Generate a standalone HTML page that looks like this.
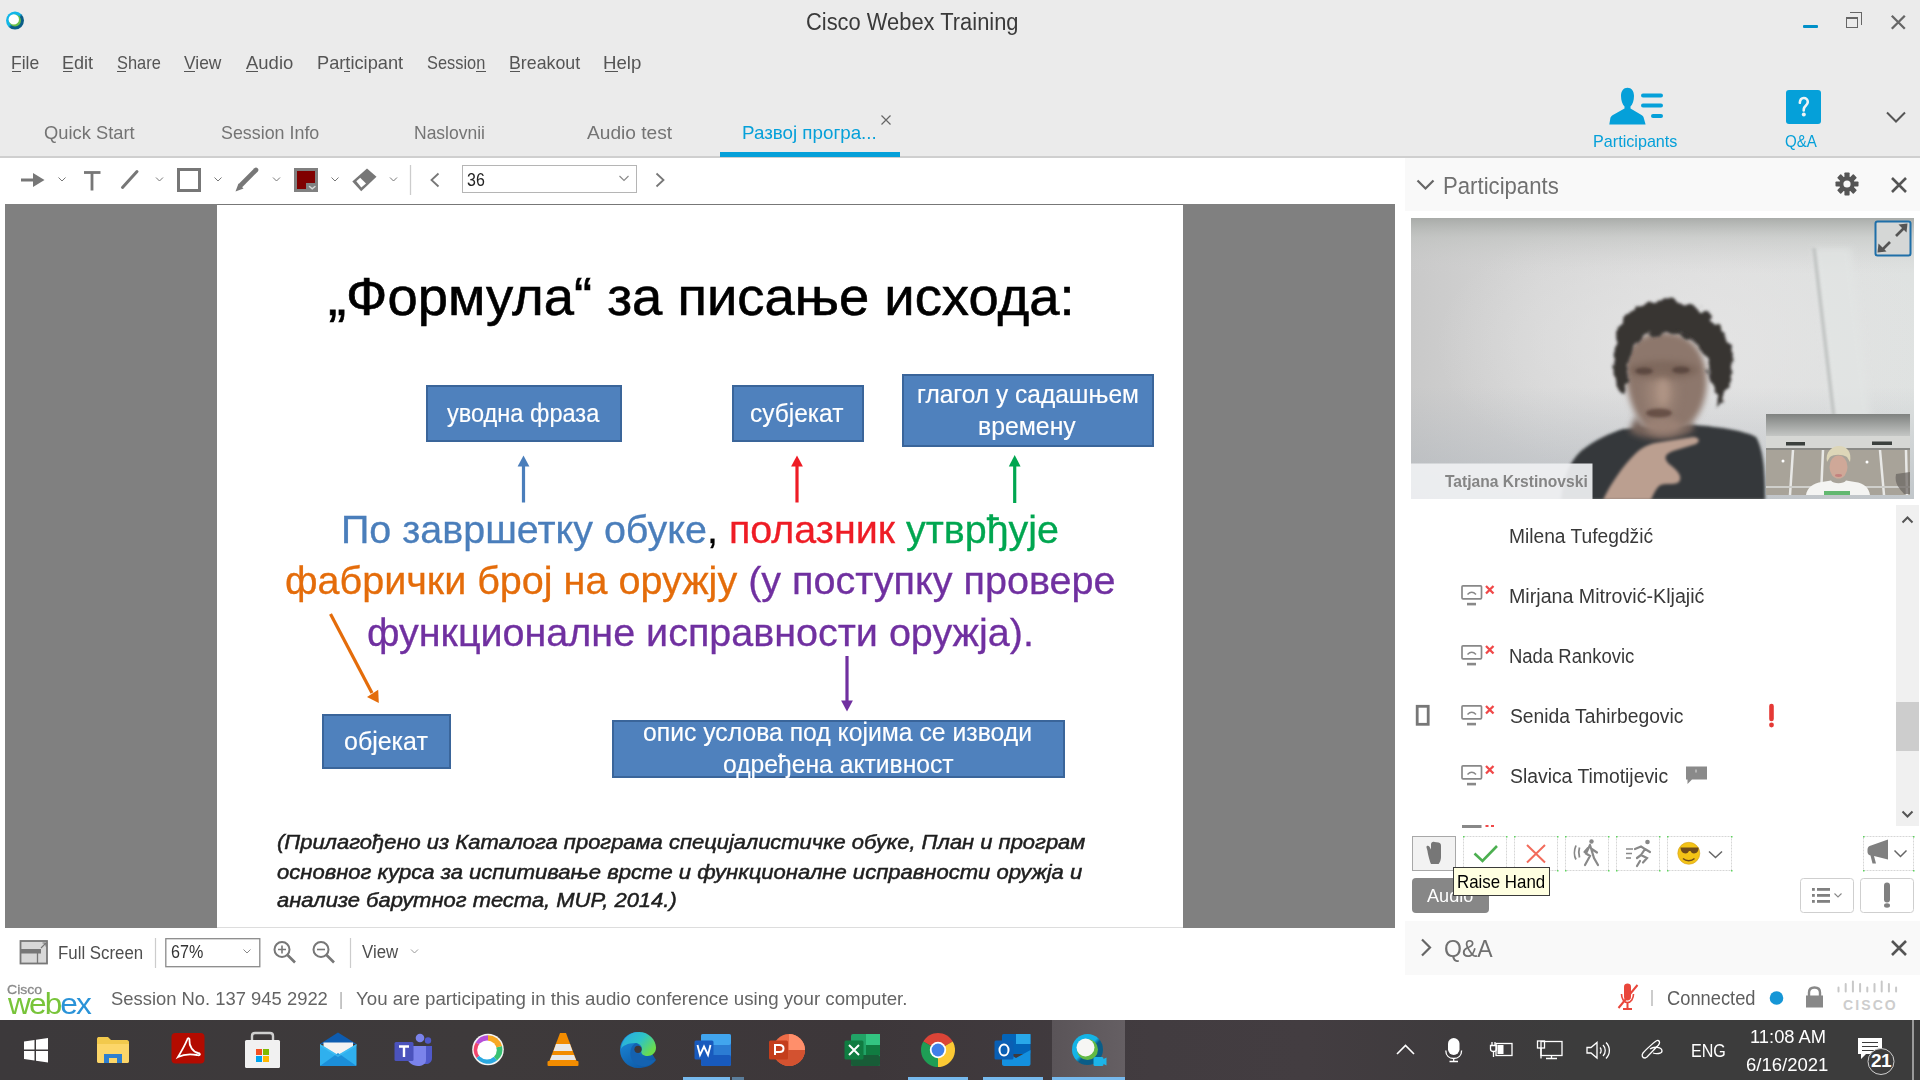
<!DOCTYPE html>
<html><head><meta charset="utf-8"><style>
html,body{margin:0;padding:0;width:1920px;height:1080px;overflow:hidden;background:#ebebeb;font-family:'Liberation Sans',sans-serif}
.a{position:absolute}
.t{position:absolute;white-space:nowrap;transform-origin:0 0}
.bm{display:inline-block;width:0;height:0}
</style></head><body>
<!-- top chrome -->
<div class=a style="left:0;top:0;width:1920px;height:157px;background:#ebebeb"></div>
<div class=a style="left:0;top:156px;width:1920px;height:2px;background:#cfcfcf"></div>
<!-- webex app icon -->
<svg class=a style="left:5px;top:11px" width="20" height="20" viewBox="0 0 20 20">
 <defs><linearGradient id="wring" x1="0.2" y1="0.2" x2="0.8" y2="0.8"><stop offset="0.45" stop-color="#12b6e8"/><stop offset="0.6" stop-color="#0a5d88"/></linearGradient></defs>
 <circle cx="10" cy="9.6" r="9" fill="url(#wring)"/>
 <circle cx="10" cy="9.6" r="6" fill="#6bbf48"/>
 <circle cx="8.8" cy="8.4" r="5.2" fill="#fff"/>
</svg>
<!-- window controls -->
<div class=a style="left:1803px;top:25px;width:15px;height:3px;background:#0090c8;border-radius:1px"></div>
<div class=a style="left:1849.6px;top:12px;width:11.4px;height:11.7px;border-top:1.9px solid #666;border-right:1.9px solid #666"></div>
<div class=a style="left:1846.4px;top:16.8px;width:10px;height:7.8px;border:1.8px solid #666;border-top-width:2.2px;background:#ebebeb"></div>
<svg class=a style="left:1889px;top:13px" width="18" height="18"><path d="M2.8 2.8L15.8 15.8M15.8 2.8L2.8 15.8" stroke="#666" stroke-width="2.3"/></svg>
<!-- tab underline & close -->
<div class=a style="left:720px;top:151.5px;width:180px;height:5.5px;background:#05a0d9"></div>
<svg class=a style="left:880px;top:114px" width="12" height="12"><path d="M1.5 1.5L10.5 10.5M10.5 1.5L1.5 10.5" stroke="#666" stroke-width="1.2"/></svg>
<!-- participants icon -->
<svg class=a style="left:1605px;top:86px" width="62" height="40" viewBox="0 0 62 40">
 <path d="M22.5 1.8C26.5 1.8 29 5 29 10C29 14.5 27.5 18.5 25.5 20.5L25.5 22.5L36.5 29C38 30 38.7 31 38.9 32.5L40.6 38.5H4.3L5.3 32.5C5.5 31 6.2 30 7.5 29.2L19.5 22.5L19.5 20.5C17.5 18.5 16 14.5 16 10C16 5 18.5 1.8 22.5 1.8Z" fill="#05a0d9"/>
 <rect x="36" y="7.5" width="22" height="4" rx="2" fill="#05a0d9"/>
 <rect x="36" y="17.5" width="22" height="4" rx="2" fill="#05a0d9"/>
 <rect x="46" y="28" width="12" height="4" rx="2" fill="#05a0d9"/>
</svg>
<!-- Q&A icon -->
<div class=a style="left:1786px;top:90px;width:35px;height:34px;background:#05a0d9;border-radius:3px"></div>
<svg class=a style="left:1786px;top:90px" width="35" height="35" viewBox="1786 90 35 35"><path d="M1799.8 102.8C1800 99.5 1802 98 1803.8 98C1806 98 1807.8 99.6 1807.8 102C1807.8 104.5 1805.5 105.5 1804.3 107.5C1803.8 108.3 1803.7 109.2 1803.7 110.5" stroke="#eef3f5" stroke-width="2.6" fill="none" stroke-linecap="round"/><circle cx="1803.8" cy="114.6" r="2" fill="#eef3f5"/></svg>
<svg class=a style="left:1885px;top:110px" width="22" height="15"><path d="M2 2.5L11 11.5L20 2.5" stroke="#555" stroke-width="2" fill="none"/></svg>

<!-- annotation toolbar -->
<div class=a style="left:0;top:158px;width:1405px;height:46px;background:#fff"></div>
<svg class=a style="left:0;top:158px" width="700" height="46">
 <g fill="#777" stroke="#777">
  <path d="M21 22h14" stroke-width="3" fill="none"/><path d="M33 15L44.5 22L33 29Z" stroke="none"/>
  <path d="M58.5 19.5l3.5 3.5l3.5-3.5" stroke-width="1" fill="none"/>
  <path d="M84 14.5h16.5" stroke-width="2.8" fill="none"/><path d="M92 14.5v18" stroke-width="2.8" fill="none"/>
  <path d="M122.5 29.5L137 13.5" stroke-width="3" stroke-linecap="round" fill="none"/>
  <path d="M156 19.5l3.5 3.5l3.5-3.5" stroke-width="1" fill="none"/>
  <rect x="178.5" y="11.5" width="21" height="21" stroke-width="3" fill="none"/>
  <path d="M214.5 19.5l3.5 3.5l3.5-3.5" stroke-width="1" fill="none"/>
  <path d="M241 27L256 12" stroke-width="4.6" stroke-linecap="round" fill="none"/><path d="M235.5 33.5L238.5 25.5L243.5 30.5Z" stroke="none"/>
  <path d="M273 19.5l3.5 3.5l3.5-3.5" stroke-width="1" fill="none"/>
  <path d="M331.5 19.5l3.5 3.5l3.5-3.5" stroke-width="1" fill="none"/>
  <path d="M352.3 23.4L367 10.5L376.5 18.7L361.2 33.3Z" stroke="none"/>
  <path d="M356.3 23.3L360.2 19.8L366 25.6L361.3 29.5Z" fill="#fff" stroke="none"/>
  <path d="M390 19.5l3.5 3.5l3.5-3.5" stroke-width="1" fill="none"/>
  <path d="M410.5 7v30" stroke="#ccc" stroke-width="1.3" fill="none"/>
  <path d="M438.5 15.5l-7 6.5l7 6.5" stroke-width="1.8" fill="none"/>
  <path d="M656.5 15.5l7 6.5l-7 6.5" stroke-width="1.8" fill="none"/>
 </g>
</svg>
<div class=a style="left:294px;top:168px;width:24px;height:24px;background:#808080"></div>
<div class=a style="left:297px;top:171px;width:18px;height:18px;background:#800000"></div>
<div class=a style="left:306px;top:183px;width:12px;height:9px;background:#808080"></div>
<svg class=a style="left:306px;top:183px" width="12" height="9"><path d="M3.5 3.5L6.2 5.8L9 3.5" stroke="#d8d8d8" stroke-width="1.5" fill="none" stroke-linecap="round"/></svg>
<div class=a style="left:462px;top:165px;width:173px;height:26px;border:1.5px solid #b5b5b5;background:#fff"></div>
<svg class=a style="left:618px;top:174px" width="12" height="9"><path d="M1.5 2l4.5 4.5L10.5 2" stroke="#888" stroke-width="1.1" fill="none"/></svg>

<!-- slide area -->
<div class=a style="left:0;top:204px;width:1405px;height:816px;background:#fff"></div>
<div class=a style="left:5px;top:204px;width:1390px;height:724px;background:#808080"></div>
<div class=a style="left:217px;top:204px;width:966px;height:1px;background:#777"></div>
<div class=a style="left:217px;top:205px;width:966px;height:722px;background:#fff"></div>
<div class=a style="left:217px;top:927px;width:966px;height:1px;background:#ddd"></div>

<!-- right panel -->
<div class=a style="left:1405px;top:158px;width:515px;height:862px;background:#fff"></div>
<div class=a style="left:1405px;top:158px;width:515px;height:53px;background:#f9f9f9"></div>

<!-- slide boxes -->
<div class=a style="left:426px;top:384.5px;width:192px;height:53px;background:#4f81bd;border:2px solid #3a659a"></div>
<div class=a style="left:732px;top:384.5px;width:127.5px;height:53px;background:#4f81bd;border:2px solid #3a659a"></div>
<div class=a style="left:901.5px;top:374px;width:248px;height:69px;background:#4f81bd;border:2px solid #3a659a"></div>
<div class=a style="left:322px;top:714px;width:125px;height:51px;background:#4f81bd;border:2px solid #3a659a"></div>
<div class=a style="left:611.5px;top:719.5px;width:449.5px;height:54px;background:#4f81bd;border:2px solid #3a659a"></div>
<svg class=a style="left:217px;top:205px" width="966" height="722">
 <g transform="translate(-217,-205)">
  <path d="M523.5 502.5V464" stroke="#4a7ebb" stroke-width="3.2"/><path d="M517.6 466.5L523.5 455.5L529.4 466.5Z" fill="#4a7ebb"/>
  <path d="M797 502.5V464" stroke="#ee1c25" stroke-width="3.2"/><path d="M791.1 466.5L797 455.5L802.9 466.5Z" fill="#ee1c25"/>
  <path d="M1014.7 503V464" stroke="#00a650" stroke-width="3.2"/><path d="M1008.8 466.5L1014.7 455L1020.6 466.5Z" fill="#00a650"/>
  <path d="M847 656V702" stroke="#7030a0" stroke-width="3.2"/><path d="M841.1 700.5L847 711.5L852.9 700.5Z" fill="#7030a0"/>
  <path d="M330.5 614L372 693" stroke="#e46c0a" stroke-width="3.2"/><path d="M367 697L378.8 703L378.2 689.8Z" fill="#e46c0a"/>
 </g>
</svg>

<!-- panel header icons -->
<svg class=a style="left:1415px;top:177px" width="22" height="16"><path d="M2.5 3.5L10.5 11.5L18.5 3.5" stroke="#666" stroke-width="2.2" fill="none"/></svg>
<svg class=a style="left:1834px;top:171px" width="26" height="26" viewBox="0 0 26 26">
 <g fill="#555" transform="translate(13,13)">
  <circle r="7.6"/>
  <rect x="-2.6" y="-11.5" width="5.2" height="6" rx="0.8"/>
  <rect x="-2.6" y="-11.5" width="5.2" height="6" rx="0.8" transform="rotate(45)"/>
  <rect x="-2.6" y="-11.5" width="5.2" height="6" rx="0.8" transform="rotate(90)"/>
  <rect x="-2.6" y="-11.5" width="5.2" height="6" rx="0.8" transform="rotate(135)"/>
  <rect x="-2.6" y="-11.5" width="5.2" height="6" rx="0.8" transform="rotate(180)"/>
  <rect x="-2.6" y="-11.5" width="5.2" height="6" rx="0.8" transform="rotate(225)"/>
  <rect x="-2.6" y="-11.5" width="5.2" height="6" rx="0.8" transform="rotate(270)"/>
  <rect x="-2.6" y="-11.5" width="5.2" height="6" rx="0.8" transform="rotate(315)"/>
  <circle r="3.6" fill="#f7f7f7"/>
 </g>
</svg>
<svg class=a style="left:1889px;top:175px" width="20" height="20"><path d="M3 3L17 17M17 3L3 17" stroke="#555" stroke-width="2.6"/></svg>

<!-- video -->
<svg class=a style="left:1411px;top:218px" width="503" height="281" viewBox="0 0 503 281">
 <defs>
  <linearGradient id="vbg" x1="0" y1="0" x2="1" y2="0">
   <stop offset="0" stop-color="#c9c9c9"/><stop offset="0.25" stop-color="#d5d5d5"/><stop offset="0.6" stop-color="#dddddd"/><stop offset="1" stop-color="#dfe2e1"/>
  </linearGradient>
  <linearGradient id="vtop" x1="0" y1="0" x2="0" y2="1">
   <stop offset="0" stop-color="#a4a7a4" stop-opacity="0.9"/><stop offset="0.07" stop-color="#bcbfbc" stop-opacity="0.5"/><stop offset="0.2" stop-color="#d0d0d0" stop-opacity="0"/>
  </linearGradient>
  <linearGradient id="vbl" x1="0" y1="0" x2="0" y2="1"><stop offset="0.6" stop-color="#a9b0b8" stop-opacity="0"/><stop offset="1" stop-color="#a9b0b8" stop-opacity="0.55"/></linearGradient>
  <radialGradient id="vlight" cx="0.55" cy="0.45" r="0.5"><stop offset="0" stop-color="#e6e6e6" stop-opacity="0.8"/><stop offset="1" stop-color="#e6e6e6" stop-opacity="0"/></radialGradient>
  <filter id="bl6" x="-50%" y="-50%" width="200%" height="200%"><feGaussianBlur stdDeviation="6"/></filter>
  <filter id="bl3" x="-50%" y="-50%" width="200%" height="200%"><feGaussianBlur stdDeviation="3"/></filter>
  <filter id="bl2" x="-50%" y="-50%" width="200%" height="200%"><feGaussianBlur stdDeviation="1.6"/></filter>
  <filter id="bl1"><feGaussianBlur stdDeviation="1"/></filter>
  <filter id="rough" x="-30%" y="-30%" width="160%" height="160%"><feTurbulence type="fractalNoise" baseFrequency="0.09" numOctaves="2" seed="3" result="n"/><feDisplacementMap in="SourceGraphic" in2="n" scale="14" xChannelSelector="R" yChannelSelector="G" result="d"/><feGaussianBlur in="d" stdDeviation="1.8"/></filter>
  <clipPath id="vclip"><rect width="503" height="281"/></clipPath>
 </defs>
 <g clip-path="url(#vclip)">
 <rect width="503" height="281" fill="url(#vbg)"/>
 <rect width="503" height="281" fill="url(#vlight)"/>
 <rect width="503" height="281" fill="url(#vtop)"/>
 <rect width="503" height="281" fill="url(#vbl)"/>
 <path d="M402 30 L440 30 L460 200 L422 200Z" fill="#e2e5e4" filter="url(#bl3)" opacity="0.7"/>
 <path d="M401 30 L405 30 L425 200 L421 200Z" fill="#bfc2c1" filter="url(#bl1)" opacity="0.8"/>
 <!-- shirt -->
 <path d="M150 282 C152 262 157 245 170 233 C185 221 200 215 212 211 L284 207 C310 209 334 213 345 219 C352 231 354 250 354 282 Z" fill="#34393b" filter="url(#bl2)"/>
 <!-- neck -->
 <path d="M225 198 C232 214 268 218 280 202 L283 212 C270 224 232 224 218 213Z" fill="#75625a" filter="url(#bl3)"/>
 <!-- face -->
 <path d="M214 152 C213 124 232 113 256 114 C282 115 296 136 296 164 C295 194 278 217 252 217 C230 217 216 186 214 152Z" fill="#8d776c" filter="url(#bl3)"/>
 <ellipse cx="250" cy="175" rx="14" ry="22" fill="#a68c7e" filter="url(#bl6)" opacity="0.8"/>
 <ellipse cx="252" cy="208" rx="18" ry="8" fill="#a08578" filter="url(#bl3)" opacity="0.7"/>
 <ellipse cx="252" cy="152" rx="36" ry="9" fill="#6a5449" filter="url(#bl3)" opacity="0.45"/>
 <ellipse cx="252" cy="174" rx="6" ry="13" fill="#b39888" filter="url(#bl3)" opacity="0.8"/>
 <ellipse cx="233" cy="153" rx="9" ry="3.5" fill="#4d3b34" filter="url(#bl2)" opacity="0.7"/>
 <ellipse cx="270" cy="152" rx="9" ry="3.5" fill="#4d3b34" filter="url(#bl2)" opacity="0.7"/>
 <ellipse cx="248" cy="195" rx="13" ry="4.5" fill="#4a302c" filter="url(#bl2)" opacity="0.6"/>
 <!-- hair -->
 <path d="M204 150 C200 126 206 103 222 92 C236 82 258 80 276 85 C300 92 318 112 322 146 C322 166 314 180 306 190 C302 170 300 150 292 135 C286 124 275 118 262 117 C250 118 238 116 228 122 C220 130 217 145 215 158 C214 166 213 172 212 178 C207 168 205 160 204 150Z" fill="#383433" filter="url(#rough)"/>
 <path d="M265 112 C280 118 292 128 297 145 C293 132 284 122 270 116Z" fill="#383433" filter="url(#bl2)"/>
 <!-- hand -->
 <path d="M192 282 C200 265 212 248 224 236 C230 230 236 227 244 225 L282 219 C288 219 290 223 285 226 L262 233 C254 236 252 240 258 246 C266 252 272 258 268 264 C262 268 254 264 248 268 C244 272 242 277 240 282 Z" fill="#bb9f90" filter="url(#bl2)"/>
 </g>
 <!-- name label -->
 <rect x="0" y="245.5" width="181.5" height="35.5" fill="#eff0f2" opacity="0.93"/>
 <!-- expand button -->
 <rect x="464.5" y="3.5" width="35" height="34" fill="#d5d7d6" stroke="#1f6fa8" stroke-width="2" rx="2"/>
 <path d="M485 18L494 9" stroke="#555" stroke-width="2.6"/>
 <path d="M487.5 6.5L496.5 5.5L495.5 14.5Z" fill="#555"/>
 <path d="M479 24L470 33" stroke="#555" stroke-width="2.6"/>
 <path d="M467.5 25.5L466.5 34.5L475.5 33.5Z" fill="#555"/>
</svg>
<!-- inset video -->
<svg class=a style="left:1766px;top:414px" width="144" height="81" viewBox="0 0 144 81">
 <defs>
  <filter id="ib1" x="-20%" y="-20%" width="140%" height="140%"><feGaussianBlur stdDeviation="0.7"/></filter>
  <linearGradient id="ceil" x1="0" y1="0" x2="0" y2="1"><stop offset="0" stop-color="#7f8280"/><stop offset="1" stop-color="#c4c6c4"/></linearGradient>
 </defs>
 <rect width="144" height="81" fill="#a8a399"/>
 <rect width="144" height="22" fill="url(#ceil)"/>
 <rect y="22" width="144" height="12" fill="#d6d7d4"/>
 <rect x="20" y="28" width="19" height="3.5" fill="#3a3f3c" filter="url(#ib1)"/>
 <rect x="106" y="27.5" width="20" height="3.5" fill="#3a3f3c" filter="url(#ib1)"/>
 <rect y="34" width="144" height="2" fill="#8a8a86"/>
 <g filter="url(#ib1)">
 <path d="M27 36L24 81M57 36L55 81M114 36L118 81M140 36L141 81" stroke="#e8e8e6" stroke-width="2.5"/>
 <path d="M0 73H144" stroke="#cfcfcb" stroke-width="2"/>
 <circle cx="17" cy="47" r="1.5" fill="#fff"/><circle cx="101" cy="48" r="1.5" fill="#fff"/>
 <path d="M130 60 C128 70 134 75 138 80 L144 80 L144 58Z" fill="#6a6460" opacity="0.7"/>
 <!-- woman -->
 <path d="M61 48 C59 38 66 32 73 32 C81 32 86 38 84 48 L81 43 C76 40 68 40 64 43Z" fill="#ddd6b8"/>
 <ellipse cx="72.5" cy="53" rx="9" ry="11.5" fill="#cfa898"/>
 <ellipse cx="72.5" cy="61.5" rx="3.5" ry="1.4" fill="#c4827e"/>
 <path d="M40 81 C41 74 47 69 56 68 L65 66.5 C67 70 78 70 80 66.5 L89 68 C98 69 103 74 104 81Z" fill="#f4f4f2"/>
 <rect x="58" y="77" width="26" height="4" fill="#62b870"/>
 </g>
</svg>
<!-- participant list icons -->
<svg class=a style="left:1405px;top:500px" width="515" height="340" viewBox="1405 500 515 340">
 <defs>
  <g id="mon">
   <rect x="1462" y="585.8" width="19.5" height="13" rx="1" fill="none" stroke="#888" stroke-width="1.7"/>
   <path d="M1467.5 594.5 Q1471.7 590 1476 594.5" stroke="#888" stroke-width="1.5" fill="none"/>
   <rect x="1467" y="602.8" width="9" height="2.6" fill="#888"/>
   <path d="M1486 586L1493.5 593.5M1493.5 586L1486 593.5" stroke="#f04848" stroke-width="2.3"/>
  </g>
 </defs>
 <use href="#mon"/>
 <use href="#mon" transform="translate(0,60)"/>
 <use href="#mon" transform="translate(0,120)"/>
 <use href="#mon" transform="translate(0,180)"/>
 <rect x="1417.2" y="706.3" width="11" height="18" fill="none" stroke="#777" stroke-width="2.8"/>
 <path d="M1771.5 706v13" stroke="#e53935" stroke-width="4.6" stroke-linecap="round"/>
 <circle cx="1771.5" cy="725" r="2.4" fill="#e53935"/>
 <path d="M1686 766.5h21v13h-15l-4.5 4.5v-4.5h-1.5z" fill="#8a8a8a"/>
 <path d="M1696 769.5v3" stroke="#ddd" stroke-width="1"/>
 <!-- partial next row -->
 <rect x="1462" y="825" width="19.5" height="3" fill="#888"/>
 <rect x="1485.5" y="825" width="3" height="2" fill="#f04848"/><rect x="1491" y="825" width="3" height="2" fill="#f04848"/>
</svg>
<!-- scrollbar -->
<div class=a style="left:1896px;top:505px;width:23px;height:321px;background:#f0f0f0"></div>
<div class=a style="left:1896px;top:702px;width:23px;height:49px;background:#cdcdcd"></div>
<svg class=a style="left:1896px;top:505px" width="23" height="321">
 <path d="M6.5 17.5L11.5 12.5L16.5 17.5" stroke="#555" stroke-width="2" fill="none"/>
 <path d="M6.5 306.5L11.5 311.5L16.5 306.5" stroke="#555" stroke-width="2" fill="none"/>
</svg>

<!-- panel toolbar buttons -->
<svg class=a style="left:1405px;top:830px" width="515" height="90" viewBox="1405 830 515 90">
 <g fill="none" stroke="#d6d6d6" stroke-width="1">
  <rect x="1412.5" y="836.5" width="43" height="34" fill="#f2f2f2" stroke="#a8a8a8"/>
  <rect x="1463.5" y="836.5" width="43" height="34" stroke-dasharray="2 1"/>
  <rect x="1514.5" y="836.5" width="43" height="34" stroke-dasharray="2 1"/>
  <rect x="1565.5" y="836.5" width="43" height="34" stroke-dasharray="2 1"/>
  <rect x="1616.5" y="836.5" width="43" height="34" stroke-dasharray="2 1"/>
  <rect x="1667.5" y="836.5" width="64" height="34" stroke-dasharray="2 1"/>
  <rect x="1863.5" y="836.5" width="50" height="34" stroke-dasharray="2 1"/>
  <rect x="1800.5" y="878.5" width="53" height="34" rx="3" stroke="#cfcfcf"/>
  <rect x="1860.5" y="878.5" width="53" height="34" rx="3" stroke="#cfcfcf"/>
 </g>
 <g fill="#5fd35f">
  <rect x="1463" y="836" width="1.5" height="1.5"/><rect x="1506" y="836" width="1.5" height="1.5"/><rect x="1463" y="870" width="1.5" height="1.5"/><rect x="1506" y="870" width="1.5" height="1.5"/>
  <rect x="1514" y="836" width="1.5" height="1.5"/><rect x="1557" y="836" width="1.5" height="1.5"/><rect x="1514" y="870" width="1.5" height="1.5"/><rect x="1557" y="870" width="1.5" height="1.5"/>
  <rect x="1565" y="836" width="1.5" height="1.5"/><rect x="1608" y="836" width="1.5" height="1.5"/><rect x="1565" y="870" width="1.5" height="1.5"/><rect x="1608" y="870" width="1.5" height="1.5"/>
  <rect x="1616" y="836" width="1.5" height="1.5"/><rect x="1659" y="836" width="1.5" height="1.5"/><rect x="1616" y="870" width="1.5" height="1.5"/><rect x="1659" y="870" width="1.5" height="1.5"/>
  <rect x="1667" y="836" width="1.5" height="1.5"/><rect x="1731" y="836" width="1.5" height="1.5"/><rect x="1667" y="870" width="1.5" height="1.5"/><rect x="1731" y="870" width="1.5" height="1.5"/>
  <rect x="1863" y="836" width="1.5" height="1.5"/><rect x="1913" y="836" width="1.5" height="1.5"/><rect x="1863" y="870" width="1.5" height="1.5"/><rect x="1913" y="870" width="1.5" height="1.5"/>
 </g>
 <!-- hand -->
 <path d="M1427.5 851 L1426.5 847.5 C1426 845.5 1428.5 845 1429.5 846.8 L1431 849.5 L1431 844 C1431.5 842 1433 841.5 1434.5 842 L1438.5 842.5 C1440.5 843 1441 844 1441 846 L1441 857 C1441 860 1439.5 863.5 1438.5 864 L1431 864 C1430 862 1428 855 1427.5 851Z" fill="#777"/>
 <!-- check -->
 <path d="M1474.5 853.5L1482.5 861L1497 846" stroke="#4caf50" stroke-width="2.6" fill="none"/>
 <!-- X -->
 <path d="M1527 845L1545 862.5M1545 845L1527 862.5" stroke="#f26b5b" stroke-width="2"/>
 <!-- walk -->
 <g fill="none" stroke="#888" stroke-width="1.8">
  <path d="M1576 845.5 C1574 850 1574 856 1576 859.5"/><path d="M1579.5 847.5 C1578.5 850.5 1578.5 854 1579.5 857.5"/>
 </g>
 <circle cx="1591.5" cy="841.5" r="2.2" fill="#888"/>
 <path d="M1590 845L1586 853.5L1590 856L1585 865M1590 845L1594 858L1598 865M1588 848L1584.5 852M1591 848.5L1597 852.5" stroke="#888" stroke-width="2.2" fill="none" stroke-linecap="round"/>
 <!-- run -->
 <circle cx="1647.5" cy="842" r="2.3" fill="#888"/>
 <path d="M1626 849h7M1626 853.5h6M1626 858h5" stroke="#888" stroke-width="1.6"/>
 <path d="M1635 849L1641 846.5L1645 849L1641 855L1647 858L1643 862.5M1641 855L1637 858M1645 849L1650 852M1640 861L1637 866" stroke="#888" stroke-width="2.2" fill="none" stroke-linecap="round"/>
 <!-- emoji -->
 <circle cx="1688.8" cy="853.3" r="11" fill="#f3c316" stroke="#d4a020" stroke-width="0.6"/>
 <path d="M1679 847.5h19.5c0.5 3-1.5 6-4.5 6c-2 0-3-1.5-3.5-2.5h-1.5c-0.5 1-1.5 2.5-3.5 2.5c-3 0-5-3-5-6z" fill="#6e4a1a"/>
 <path d="M1683 858.5c3 3 8.5 3 11.5 0" stroke="#6e4a1a" stroke-width="1.4" fill="none"/>
 <path d="M1709 851.5L1715.5 857.5L1722 851.5" stroke="#666" stroke-width="1.5" fill="none"/>
 <!-- megaphone -->
 <path d="M1867.5 849.5C1867.5 847 1869 846 1871 845.5L1888 839.5V859.5L1874 856L1876 863.5L1872.5 863.5L1870.5 855.5C1868.5 855 1867.5 853.5 1867.5 852Z" fill="#808080"/>
 <path d="M1894.5 850.5L1900.5 856.5L1906.5 850.5" stroke="#666" stroke-width="1.5" fill="none"/>
 <!-- list -->
 <g fill="#808080">
  <rect x="1812" y="888" width="2.8" height="2.8"/><rect x="1817" y="888" width="13" height="2.8"/>
  <rect x="1812" y="894" width="2.8" height="2.8"/><rect x="1817" y="894" width="13" height="2.8"/>
  <rect x="1812" y="900" width="2.8" height="2.8"/><rect x="1817" y="900" width="13" height="2.8"/>
 </g>
 <path d="M1834.5 893.5L1838 897L1841.5 893.5" stroke="#888" stroke-width="1.1" fill="none"/>
 <path d="M1887 885.5v14" stroke="#808080" stroke-width="6" stroke-linecap="round"/>
 <ellipse cx="1887" cy="905.5" rx="3" ry="2.2" fill="#808080"/>
</svg>
<!-- audio button -->
<div class=a style="left:1411.5px;top:878px;width:77.5px;height:35px;background:#878787;border-radius:4px"></div>
<!-- tooltip -->
<div class=a style="left:1452.5px;top:867px;width:95.5px;height:26.5px;background:#ffffe1;border:1px solid #3a3a3a;z-index:5"></div>

<!-- Q&A header -->
<div class=a style="left:1405px;top:921px;width:515px;height:53.5px;background:#f9f9f9"></div>
<svg class=a style="left:1418px;top:937px" width="16" height="22"><path d="M4 2.5L12 10.5L4 18.5" stroke="#666" stroke-width="2.2" fill="none"/></svg>
<svg class=a style="left:1889px;top:938px" width="20" height="20"><path d="M3 3L17 17M17 3L3 17" stroke="#555" stroke-width="2.6"/></svg>

<!-- status right -->
<svg class=a style="left:1610px;top:976px" width="300" height="40" viewBox="1610 976 300 40">
 <path d="M1624 986.5C1624 984.5 1625.5 983.5 1627.5 983.5C1629.5 983.5 1631 984.5 1631 986.5V997C1631 999 1629.5 1000.5 1627.5 1000.5C1625.5 1000.5 1624 999 1624 997Z" fill="#e9463b"/>
 <path d="M1621.5 994C1621.5 998.5 1624 1002.5 1627.5 1002.5C1631 1002.5 1633.5 998.5 1633.5 994" stroke="#e9463b" stroke-width="1.6" fill="none"/>
 <path d="M1627.5 1002.5V1008M1623 1009H1632" stroke="#e9463b" stroke-width="2"/>
 <path d="M1618.5 1008L1637.5 985" stroke="#e9463b" stroke-width="2"/>
 <path d="M1652 990V1006" stroke="#aaa" stroke-width="1.2"/>
 <circle cx="1776.5" cy="998" r="6.8" fill="#1596d6"/>
 <path d="M1809 996V992.5C1809 989 1811.5 987.5 1814.5 987.5C1817.5 987.5 1820 989 1820 992.5V996" stroke="#888" stroke-width="2.4" fill="none"/>
 <rect x="1806" y="995.5" width="17" height="12" fill="#888"/>
 <g stroke="#c8c8c8" stroke-width="2" stroke-linecap="round">
  <path d="M1838.5 987.5v4M1845.7 984v7.5M1852.9 981.5v10M1860.1 984v7.5M1867.3 987.5v4M1874.5 984v7.5M1881.7 981.5v10M1888.9 984v7.5M1896.1 987.5v4"/>
 </g>
</svg>
<div class=a style="left:1843px;top:998px;font:bold 14px/14px 'Liberation Sans';color:#cdcdcd;letter-spacing:2.1px">CISCO</div>

<!-- bottom toolbar -->
<svg class=a style="left:0;top:930px" width="440" height="45" viewBox="0 930 440 45">
 <rect x="20.5" y="941" width="26.5" height="22.5" fill="#d8d8d8" stroke="#777" stroke-width="1.8"/>
 <rect x="21" y="949" width="20" height="4.5" fill="#777"/>
 <path d="M37.5 952.5V963.5" stroke="#777" stroke-width="1.3"/>
 <path d="M41 948L46 943M42.5 943H46V946.5" stroke="#777" stroke-width="1.1" fill="none"/>
 <path d="M155.5 938V968" stroke="#ccc" stroke-width="1.2"/>
 <rect x="165.8" y="938.7" width="94" height="28" fill="#fff" stroke="#8a8a8a" stroke-width="1.3"/>
 <path d="M243.5 949.5L247 953L250.5 949.5" stroke="#888" stroke-width="1" fill="none"/>
 <circle cx="282" cy="949.5" r="7.5" fill="none" stroke="#777" stroke-width="2"/>
 <path d="M287.5 955L295 962.5" stroke="#777" stroke-width="2.6"/>
 <path d="M278 949.5h8M282 945.5v8" stroke="#777" stroke-width="1.6"/>
 <circle cx="321" cy="949.5" r="7.5" fill="none" stroke="#777" stroke-width="2"/>
 <path d="M326.5 955L334 962.5" stroke="#777" stroke-width="2.6"/>
 <path d="M317 949.5h8" stroke="#777" stroke-width="1.6"/>
 <path d="M350.5 938V968" stroke="#ccc" stroke-width="1.2"/>
 <path d="M411 949.5L414.5 953L418 949.5" stroke="#999" stroke-width="1" fill="none"/>
</svg>
<!-- webex logo -->
<div class=a style="left:7.3px;top:982.5px;font:13px/13px 'Liberation Sans';color:#8a8a8a;transform:scaleX(1.08);transform-origin:0 0;-webkit-text-stroke:0.3px #8a8a8a">Cisco</div>
<div class=a style="left:7.8px;top:988.5px;font:30px/30px 'Liberation Sans';letter-spacing:-1.8px;transform:scaleX(1.055);transform-origin:0 0"><span style="color:#78c43a">web</span><span style="color:#2a93d8">ex</span></div>

<!-- taskbar -->
<div class=a style="left:0;top:1020px;width:1920px;height:60px;background:linear-gradient(90deg,#3c393b 0%,#3e3a3b 25%,#3d373a 45%,#423c40 60%,#433d41 68%,#3e3b3d 76%,#3c3c3c 82%,#3c3c3c 100%)"></div>
<div class=a style="left:1052px;top:1020px;width:73px;height:60px;background:linear-gradient(90deg,#5a5458,#655f63)"></div>
<div class=a style="left:1912px;top:1020px;width:1.5px;height:60px;background:#9a9a9a"></div>
<div class=a style="left:683px;top:1077px;width:47px;height:3px;background:#76b9ed"></div>
<div class=a style="left:731.5px;top:1077px;width:12px;height:3px;background:#5b7e9c"></div>
<div class=a style="left:908px;top:1077px;width:60px;height:3px;background:#76b9ed"></div>
<div class=a style="left:983px;top:1077px;width:60px;height:3px;background:#76b9ed"></div>
<div class=a style="left:1052px;top:1077px;width:73px;height:3px;background:#76b9ed"></div>
<svg class=a style="left:0;top:1020px" width="1920" height="60" viewBox="0 1020 1920 60">
 <!-- windows -->
 <path d="M24 1041.5L34.5 1040V1049.5H24ZM36 1039.8L48 1038V1049.5H36ZM24 1051H34.5V1060.5L24 1059ZM36 1051H48V1062.5L36 1060.8Z" fill="#fff"/>
 <!-- explorer -->
 <path d="M97 1039C97 1037.5 98 1037 99 1037H108L111 1040H127C128 1040 129 1041 129 1042V1061C129 1062 128 1063 127 1063H99C98 1063 97 1062 97 1061Z" fill="#f2c94c"/>
 <path d="M97 1044H129V1061C129 1062 128 1063 127 1063H99C98 1063 97 1062 97 1061Z" fill="#fcd669"/>
 <path d="M104 1063V1054H122V1063H117V1058H109V1063Z" fill="#2e7fd0"/>
 <!-- acrobat -->
 <rect x="171.5" y="1033" width="33" height="30.5" rx="4" fill="#b30b00"/>
 <path d="M178 1057C181 1052 185 1045 187 1040C188 1037 190 1038 189.5 1041C189 1046 193 1052 198 1053C201 1053.5 200.5 1056 197 1055C191 1054 184 1054 178 1057Z" fill="none" stroke="#fff" stroke-width="1.8"/>
 <!-- store -->
 <path d="M252 1041V1036C252 1034 253.5 1033 255 1033H270C271.5 1033 273 1034 273 1036V1041" stroke="#cfcfcf" stroke-width="2.4" fill="none"/>
 <rect x="245" y="1040" width="35" height="28" rx="1.5" fill="#f1f1f1"/>
 <rect x="256" y="1049" width="6" height="6" fill="#f25022"/><rect x="263" y="1049" width="6" height="6" fill="#7fba00"/>
 <rect x="256" y="1056" width="6" height="6" fill="#00a4ef"/><rect x="263" y="1056" width="6" height="6" fill="#ffb900"/>
 <!-- mail -->
 <path d="M320 1044L338 1032.5L356.5 1044Z" fill="#0d5cb0"/>
 <path d="M323.5 1042.5H353V1047L338 1056L323.5 1047Z" fill="#f2f2f2"/>
 <path d="M320 1044L338 1055L356.5 1044V1065C356.5 1065.6 356 1066 355.5 1066H321C320.4 1066 320 1065.6 320 1065Z" fill="#2fb0ee"/>
 <path d="M320 1066L338 1053L356.5 1066Z" fill="#1b8ed8"/>
 <path d="M320 1044L338 1055L356.5 1044L356.5 1046L338 1057L320 1046Z" fill="#48c4f6" opacity="0.6"/>
 <!-- teams -->
 <circle cx="420" cy="1038" r="4.3" fill="#7b83eb"/>
 <circle cx="428" cy="1040.5" r="3.2" fill="#5059c9"/>
 <path d="M423 1046H432V1058C432 1062 429 1064 426 1064H423Z" fill="#5059c9"/>
 <path d="M405 1046H426V1060C426 1064 422 1066 418 1066C412 1066 408 1062 407 1058Z" fill="#7b83eb"/>
 <rect x="394.5" y="1042" width="19" height="19" rx="1.5" fill="#4b53bc"/>
 <path d="M399 1046.5H409M404 1046.5V1057" stroke="#fff" stroke-width="2.4"/>
 <!-- webex teams circle -->
 <circle cx="488" cy="1049.5" r="15.8" fill="#f4f4f4"/>
 <path d="M488 1049.5L488 1035.3A14.2 14.2 0 0 0 475.7 1042.4Z" fill="#b64fd8"/>
 <path d="M488 1049.5L475.7 1042.4A14.2 14.2 0 0 0 476.5 1058Z" fill="#f0456e"/>
 <path d="M488 1049.5L476.5 1058A14.2 14.2 0 0 0 497 1060.5Z" fill="#2aa8e0"/>
 <path d="M488 1049.5L497 1060.5A14.2 14.2 0 0 0 502 1046Z" fill="#38c172"/>
 <path d="M488 1049.5L502 1046A14.2 14.2 0 0 0 488 1035.3Z" fill="#f7a823"/>
 <ellipse cx="487" cy="1050" rx="9.8" ry="9.5" fill="#fff"/>
<!-- vlc -->
 <path d="M560 1033H566L577 1062H549Z" fill="#f28c00"/>
 <path d="M556 1044H570L572.5 1051H553.5Z" fill="#e8e8e8"/>
 <path d="M552 1055H574L576 1060H550Z" fill="#e8e8e8"/>
 <rect x="547.5" y="1061" width="31" height="5" rx="1" fill="#f28c00"/>
 <!-- edge -->
 <defs>
  <linearGradient id="edg" x1="0" y1="0" x2="1" y2="0.6"><stop offset="0" stop-color="#2aa7e6"/><stop offset="0.55" stop-color="#2dc3c8"/><stop offset="1" stop-color="#6bdc4c"/></linearGradient>
  <linearGradient id="edb" x1="0" y1="0" x2="0.6" y2="1"><stop offset="0" stop-color="#1c8fe0"/><stop offset="1" stop-color="#0e5aa6"/></linearGradient>
 </defs>
 <path d="M656 1060C652 1066 645 1068 638 1068C628 1068 620 1060 620 1050C620 1040 628 1032 638 1032Z" fill="url(#edb)"/>
 <path d="M621 1049C622 1038 630 1032 639 1032C649 1032 656 1040 656 1047.5C656 1053 652 1056 647.5 1056C643 1056 640.5 1053.5 641.5 1050.5C643 1047 640 1043 635 1043C628 1043 622 1046 621 1049Z" fill="url(#edg)"/>
 <path d="M636 1043C630 1046 629 1054 632 1060C635 1065 641 1067 646 1066C651 1065 654 1062 655.5 1059.5C651 1061 645 1060.5 641.5 1057C638 1053.5 638 1049 641.5 1050.5C640 1046 638.5 1043.5 636 1043Z" fill="#1462b0"/>
 <circle cx="638" cy="1049.3" r="3.6" fill="#3c383a"/>
 <!-- word -->
 <rect x="701" y="1034" width="30" height="32" rx="2" fill="#2b7cd3"/>
 <rect x="701" y="1034" width="30" height="11" rx="2" fill="#41a5ee"/>
 <rect x="701" y="1055" width="30" height="11" rx="2" fill="#185abd"/>
 <rect x="694.5" y="1040.5" width="19" height="19" rx="1.5" fill="#185abd"/>
 <path d="M697.5 1045L700 1055L704 1046.5L708 1055L710.5 1045" stroke="#fff" stroke-width="1.9" fill="none"/>
 <!-- powerpoint -->
 <circle cx="789" cy="1050" r="16" fill="#ed6c47"/>
 <path d="M789 1034A16 16 0 0 1 805 1050H789Z" fill="#ff8f6b"/>
 <path d="M773 1050A16 16 0 0 0 805 1050Z" fill="#d35230"/>
 <rect x="769" y="1040.5" width="19" height="19" rx="1.5" fill="#c43e1c"/>
 <path d="M775 1055V1045H779.5C782 1045 783.5 1046.5 783.5 1048.5C783.5 1050.5 782 1052 779.5 1052H775" stroke="#fff" stroke-width="2" fill="none"/>
 <!-- excel -->
 <rect x="851" y="1034" width="29" height="32" rx="2" fill="#21a366"/>
 <rect x="866" y="1034" width="14" height="11" fill="#33c481"/>
 <rect x="851" y="1055" width="29" height="11" rx="2" fill="#185c37"/>
 <rect x="866" y="1045" width="14" height="10" fill="#107c41"/>
 <rect x="844.5" y="1040.5" width="19" height="19" rx="1.5" fill="#107c41"/>
 <path d="M849 1045L859 1055M859 1045L849 1055" stroke="#fff" stroke-width="2"/>
 <!-- chrome -->
 <path d="M938 1050L923.28 1041.5A17 17 0 0 1 952.72 1041.5Z" fill="#db4437"/>
 <path d="M938 1050L952.72 1041.5A17 17 0 0 1 938 1067Z" fill="#fcc934"/>
 <path d="M938 1050L938 1067A17 17 0 0 1 923.28 1041.5Z" fill="#1e9e55"/>
 <circle cx="938" cy="1050" r="8.2" fill="#fff"/>
 <circle cx="938" cy="1050" r="6.4" fill="#3f7fe8"/>
 <!-- outlook -->
 <rect x="1002" y="1034" width="28.5" height="20" rx="1.5" fill="#0364b8"/>
 <rect x="1016" y="1034" width="14.5" height="10" fill="#28a8ea"/>
 <path d="M1002 1050L1016 1058L1030.5 1050V1064C1030.5 1065 1029.5 1066 1028.5 1066H1004C1003 1066 1002 1065 1002 1064Z" fill="#1490df"/>
 <rect x="994.5" y="1040.5" width="19" height="19" rx="1.5" fill="#0a5fb4"/>
 <ellipse cx="1004" cy="1050" rx="4.5" ry="5.5" stroke="#fff" stroke-width="2" fill="none"/>
 <!-- webex active -->
 <defs><linearGradient id="wring2" x1="0.2" y1="0.2" x2="0.8" y2="0.8"><stop offset="0.45" stop-color="#14b4e6"/><stop offset="0.6" stop-color="#0a5d88"/></linearGradient></defs>
 <circle cx="1087.5" cy="1049.5" r="15.5" fill="url(#wring2)"/>
 <circle cx="1087.5" cy="1049.5" r="10.5" fill="#62b944"/>
 <circle cx="1085.5" cy="1047.5" r="9" fill="#f6f6f4"/>
 <rect x="1093.5" y="1057" width="10" height="9" rx="1.5" fill="#1db4e8"/>
 <path d="M1102.5 1059.5L1106.5 1057.5V1065.5L1102.5 1063.5Z" fill="#1db4e8"/>
 <!-- tray -->
 <path d="M1397 1054L1405.5 1045.5L1414 1054" stroke="#fff" stroke-width="1.6" fill="none"/>
 <rect x="1448" y="1038" width="11.5" height="17" rx="5.75" fill="#fff"/>
 <path d="M1445.8 1050.5C1445.8 1055.5 1449 1058.5 1453.7 1058.5C1458.4 1058.5 1461.6 1055.5 1461.6 1050.5M1453.7 1058.5V1061.5M1449.5 1061.5H1458" stroke="#fff" stroke-width="1.3" fill="none"/>
 <g stroke="#fff" stroke-width="1.3" fill="none">
  <rect x="1496" y="1043.5" width="16" height="12"/>
  <path d="M1492 1042V1045.5M1495 1042V1045.5M1490.5 1045.5H1496.5V1049C1496.5 1050.5 1495 1051.5 1493.5 1051.5C1492 1051.5 1490.5 1050.5 1490.5 1049ZM1493.5 1051.5V1057"/>
  <rect x="1541" y="1041.5" width="21" height="14"/>
  <path d="M1551.5 1055.5V1058.5M1546 1058.5H1557"/>
  <rect x="1537.5" y="1041" width="7" height="7"/>
  <path d="M1541 1048V1058.5"/>
  <path d="M1587 1047.5H1591L1597 1042.5V1058L1591 1053H1587Z"/>
  <path d="M1600 1047.5C1601.5 1049 1601.5 1052 1600 1053.5M1603 1045C1606 1048 1606 1053 1603 1056M1606 1042.5C1610.5 1047 1610.5 1054 1606 1058.5"/>
  <path d="M1645 1058C1642 1058 1641.5 1055 1643 1053C1645 1050.5 1656 1040 1658 1040.5C1660 1041 1660 1043 1658.5 1045L1647 1057ZM1650 1049C1654 1046 1662 1047 1662 1051C1662 1054 1656 1054 1653 1053"/>
 </g>
 <rect x="1497.5" y="1045" width="6" height="9" fill="#fff"/>
 <!-- notifications -->
 <path d="M1858 1038H1882V1054H1866L1861 1059V1054H1858Z" fill="#fff"/>
 <path d="M1862 1042.5H1878M1862 1046.5H1878M1862 1050.5H1874" stroke="#3c3c3c" stroke-width="1.2"/>
 <circle cx="1881" cy="1061.5" r="13" fill="#3c3c3c" stroke="#cfcfcf" stroke-width="1"/>
</svg>
<div class=a style="left:1869px;top:1051px;width:24px;text-align:center;font:bold 19px/20px 'Liberation Sans';color:#fff;letter-spacing:-0.5px">21</div>
<!-- menu underlines -->
<div class=a style="left:12px;top:71px;width:9px;height:1.3px;background:#555"></div>
<div class=a style="left:63px;top:71px;width:9px;height:1.3px;background:#555"></div>
<div class=a style="left:117px;top:71px;width:9px;height:1.3px;background:#555"></div>
<div class=a style="left:184px;top:71px;width:11px;height:1.3px;background:#555"></div>
<div class=a style="left:246px;top:71px;width:12px;height:1.3px;background:#555"></div>
<div class=a style="left:343.6px;top:71px;width:6.2px;height:1.3px;background:#555"></div>
<div class=a style="left:475.6px;top:71px;width:10px;height:1.3px;background:#555"></div>
<div class=a style="left:510px;top:71px;width:10px;height:1.3px;background:#555"></div>
<div class=a style="left:604.8px;top:71px;width:12.8px;height:1.3px;background:#555"></div>

<div class=t id=t0 style="left:806.07px;top:11.01px;font:normal normal 23.5px/23.5px 'Liberation Sans', sans-serif;color:#3a3a3a;transform:scaleX(0.9316);">Cisco Webex Training</div><div class=t id=t1 style="left:11.05px;top:54.01px;font:normal normal 18.5px/18.5px 'Liberation Sans', sans-serif;color:#555555;transform:scaleX(0.9467);">File</div><div class=t id=t2 style="left:62.02px;top:54.01px;font:normal normal 18.5px/18.5px 'Liberation Sans', sans-serif;color:#555555;transform:scaleX(0.9760);">Edit</div><div class=t id=t3 style="left:117.00px;top:54.01px;font:normal normal 18.5px/18.5px 'Liberation Sans', sans-serif;color:#555555;transform:scaleX(0.8864);">Share</div><div class=t id=t4 style="left:184.00px;top:54.01px;font:normal normal 18.5px/18.5px 'Liberation Sans', sans-serif;color:#555555;transform:scaleX(0.9405);">View</div><div class=t id=t5 style="left:246.00px;top:54.01px;font:normal normal 18.5px/18.5px 'Liberation Sans', sans-serif;color:#555555;transform:scaleX(0.9994);">Audio</div><div class=t id=t6 style="left:317.01px;top:54.01px;font:normal normal 18.5px/18.5px 'Liberation Sans', sans-serif;color:#555555;transform:scaleX(0.9853);">Participant</div><div class=t id=t7 style="left:427.00px;top:54.01px;font:normal normal 18.5px/18.5px 'Liberation Sans', sans-serif;color:#555555;transform:scaleX(0.8851);">Session</div><div class=t id=t8 style="left:509.04px;top:54.01px;font:normal normal 18.5px/18.5px 'Liberation Sans', sans-serif;color:#555555;transform:scaleX(0.9602);">Breakout</div><div class=t id=t9 style="left:602.99px;top:54.01px;font:normal normal 18.5px/18.5px 'Liberation Sans', sans-serif;color:#555555;transform:scaleX(1.0066);">Help</div><div class=t id=t10 style="left:44.00px;top:124.01px;font:normal normal 18.5px/18.5px 'Liberation Sans', sans-serif;color:#747474;transform:scaleX(0.9906);">Quick Start</div><div class=t id=t11 style="left:221.00px;top:124.01px;font:normal normal 18.5px/18.5px 'Liberation Sans', sans-serif;color:#747474;transform:scaleX(0.9653);">Session Info</div><div class=t id=t12 style="left:414.05px;top:124.01px;font:normal normal 18.5px/18.5px 'Liberation Sans', sans-serif;color:#747474;transform:scaleX(0.9459);">Naslovnii</div><div class=t id=t13 style="left:587.00px;top:124.01px;font:normal normal 18.5px/18.5px 'Liberation Sans', sans-serif;color:#747474;transform:scaleX(1.0349);">Audio test</div><div class=t id=t14 style="left:741.99px;top:124.01px;font:normal normal 18.5px/18.5px 'Liberation Sans', sans-serif;color:#05a0d9;transform:scaleX(1.0149);">Развој програ...</div><div class=t id=t15 style="left:1593.05px;top:133.00px;font:normal normal 17px/17px 'Liberation Sans', sans-serif;color:#05a0d9;transform:scaleX(0.9505);">Participants</div><div class=t id=t16 style="left:1784.50px;top:133.00px;font:normal normal 17px/17px 'Liberation Sans', sans-serif;color:#05a0d9;transform:scaleX(0.8889);">Q&amp;A</div><div class=t id=t17 style="left:467.00px;top:170.01px;font:normal normal 19px/19px 'Liberation Sans', sans-serif;color:#222;transform:scaleX(0.8412);">36</div><div class=t id=t18 style="left:328.38px;top:270.01px;font:normal normal 53.5px/53.5px 'Liberation Sans', sans-serif;color:#000;transform:scaleX(1.0166);-webkit-text-stroke:0.6px #000">„Формула“ за писање исхода:</div><div class=t id=t19 style="left:447.00px;top:400.60px;font:normal normal 25.5px/25.5px 'Liberation Sans', sans-serif;color:#fff;transform:scaleX(0.9239);-webkit-text-stroke:0.15px #fff">уводна фраза</div><div class=t id=t20 style="left:750.04px;top:400.60px;font:normal normal 25.5px/25.5px 'Liberation Sans', sans-serif;color:#fff;transform:scaleX(0.9599);-webkit-text-stroke:0.15px #fff">субјекат</div><div class=t id=t21 style="left:916.74px;top:381.60px;font:normal normal 25.5px/25.5px 'Liberation Sans', sans-serif;color:#fff;transform:scaleX(0.9614);-webkit-text-stroke:0.15px #fff">глагол у садашњем</div><div class=t id=t22 style="left:978.03px;top:413.82px;font:normal normal 25.5px/25.5px 'Liberation Sans', sans-serif;color:#fff;transform:scaleX(0.9729);-webkit-text-stroke:0.15px #fff">времену</div><div class=t id=t23 style="left:343.82px;top:729.00px;font:normal normal 25.5px/25.5px 'Liberation Sans', sans-serif;color:#fff;transform:scaleX(0.9791);-webkit-text-stroke:0.15px #fff">објекат</div><div class=t id=t24 style="left:642.73px;top:719.82px;font:normal normal 25.5px/25.5px 'Liberation Sans', sans-serif;color:#fff;transform:scaleX(0.9704);-webkit-text-stroke:0.15px #fff">опис услова под којима се изводи</div><div class=t id=t25 style="left:722.73px;top:752.32px;font:normal normal 25.5px/25.5px 'Liberation Sans', sans-serif;color:#fff;transform:scaleX(0.9677);-webkit-text-stroke:0.15px #fff">одређена активност</div><div class=t id=t26 style="left:277.20px;top:832.20px;font:italic normal 20.6px/20.6px 'Liberation Sans', sans-serif;color:#1e1e1e;transform:scaleX(1.0656);-webkit-text-stroke:0.5px #1e1e1e">(Прилагођено из Каталога програма специјалистичке обуке, План и програм</div><div class=t id=t27 style="left:277.20px;top:861.51px;font:italic normal 20.6px/20.6px 'Liberation Sans', sans-serif;color:#1e1e1e;transform:scaleX(1.0704);-webkit-text-stroke:0.5px #1e1e1e">основног курса за испитивање врсте и функционалне исправности оружја и</div><div class=t id=t28 style="left:277.20px;top:890.31px;font:italic normal 20.6px/20.6px 'Liberation Sans', sans-serif;color:#1e1e1e;transform:scaleX(1.0660);-webkit-text-stroke:0.5px #1e1e1e">анализе барутног теста, MUP, 2014.)</div><div class=t id=t29 style="left:341.43px;top:511.42px;font:normal normal 38.5px/38.5px 'Liberation Sans', sans-serif;color:#000;transform:scaleX(1.0247);-webkit-text-stroke:0.3px currentColor"><span style='color:#4a7ebb'>По завршетку обуке</span><span style='color:#000'>, </span><span style='color:#ee1c25'>полазник</span><span style='color:#00a650'> утврђује</span></div><div class=t id=t30 style="left:285.37px;top:562.42px;font:normal normal 38.5px/38.5px 'Liberation Sans', sans-serif;color:#000;transform:scaleX(1.0270);-webkit-text-stroke:0.3px currentColor"><span style='color:#e46c0a'>фабрички број на оружју</span><span style='color:#7030a0'> (у поступку провере</span></div><div class=t id=t31 style="left:367.37px;top:613.51px;font:normal normal 38.5px/38.5px 'Liberation Sans', sans-serif;color:#000;transform:scaleX(1.0259);-webkit-text-stroke:0.3px currentColor"><span style='color:#7030a0'>функционалне исправности оружја).</span></div><div class=t id=t32 style="left:1442.89px;top:174.31px;font:normal normal 24.5px/24.5px 'Liberation Sans', sans-serif;color:#707070;transform:scaleX(0.9042);">Participants</div><div class=t id=t33 style="left:1445.00px;top:473.30px;font:normal bold 17.3px/17.3px 'Liberation Sans', sans-serif;color:#858585;transform:scaleX(0.9025);">Tatjana Krstinovski</div><div class=t id=t34 style="left:1508.64px;top:526.00px;font:normal normal 20px/20px 'Liberation Sans', sans-serif;color:#383838;transform:scaleX(0.9596);">Milena Tufegdžić</div><div class=t id=t35 style="left:1508.62px;top:586.00px;font:normal normal 20px/20px 'Liberation Sans', sans-serif;color:#383838;transform:scaleX(0.9822);">Mirjana Mitrović-Kljajić</div><div class=t id=t36 style="left:1508.68px;top:646.00px;font:normal normal 20px/20px 'Liberation Sans', sans-serif;color:#383838;transform:scaleX(0.9240);">Nada Rankovic</div><div class=t id=t37 style="left:1509.60px;top:705.71px;font:normal normal 20px/20px 'Liberation Sans', sans-serif;color:#383838;transform:scaleX(0.9649);">Senida Tahirbegovic</div><div class=t id=t38 style="left:1509.60px;top:765.50px;font:normal normal 20px/20px 'Liberation Sans', sans-serif;color:#383838;transform:scaleX(0.9674);">Slavica Timotijevic</div><div class=t id=t39 style="left:1426.70px;top:886.51px;font:normal normal 18px/18px 'Liberation Sans', sans-serif;color:#fff;transform:scaleX(1.0059);">Audio</div><div class=t id=t40 style="left:1456.59px;top:873.01px;font:normal normal 18.5px/18.5px 'Liberation Sans', sans-serif;color:#000;transform:scaleX(0.9122);z-index:6">Raise Hand</div><div class=t id=t41 style="left:1444.20px;top:937.60px;font:normal normal 23px/23px 'Liberation Sans', sans-serif;color:#707070;transform:scaleX(1.0014);">Q&amp;A</div><div class=t id=t42 style="left:1667.30px;top:989.02px;font:normal normal 19.5px/19.5px 'Liberation Sans', sans-serif;color:#5e5e5e;transform:scaleX(0.9382);">Connected</div><div class=t id=t43 style="left:57.76px;top:943.51px;font:normal normal 18px/18px 'Liberation Sans', sans-serif;color:#4e4e4e;transform:scaleX(0.9357);">Full Screen</div><div class=t id=t44 style="left:171.30px;top:943.01px;font:normal normal 18px/18px 'Liberation Sans', sans-serif;color:#333;transform:scaleX(0.8967);">67%</div><div class=t id=t45 style="left:361.80px;top:943.01px;font:normal normal 18px/18px 'Liberation Sans', sans-serif;color:#4e4e4e;transform:scaleX(0.9347);">View</div><div class=t id=t46 style="left:111.40px;top:988.81px;font:normal normal 19px/19px 'Liberation Sans', sans-serif;color:#646464;transform:scaleX(0.9683);">Session No. 137 945 2922</div><div class=t id=t47 style="left:338.67px;top:988.81px;font:normal normal 19px/19px 'Liberation Sans', sans-serif;color:#aaa;transform:scaleX(0.8333);">|</div><div class=t id=t48 style="left:355.80px;top:988.81px;font:normal normal 19px/19px 'Liberation Sans', sans-serif;color:#646464;transform:scaleX(0.9845);">You are participating in this audio conference using your computer.</div><div class=t id=t49 style="left:1691.31px;top:1041.60px;font:normal normal 18px/18px 'Liberation Sans', sans-serif;color:#fff;transform:scaleX(0.8945);">ENG</div><div class=t id=t50 style="left:1749.58px;top:1028.01px;font:normal normal 18px/18px 'Liberation Sans', sans-serif;color:#fff;transform:scaleX(1.0188);">11:08 AM</div><div class=t id=t51 style="left:1746.20px;top:1055.71px;font:normal normal 18px/18px 'Liberation Sans', sans-serif;color:#fff;transform:scaleX(1.0291);">6/16/2021</div>
</body></html>
